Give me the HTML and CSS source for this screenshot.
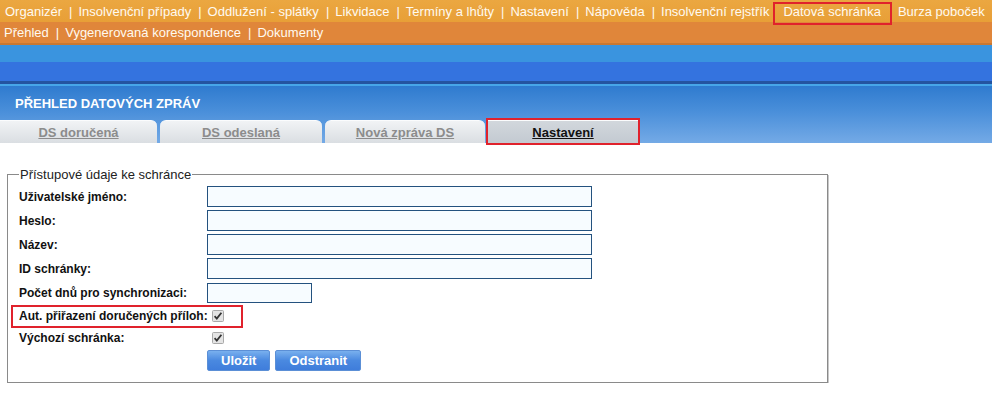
FILE: index.html
```html
<!DOCTYPE html>
<html lang="cs">
<head>
    <meta charset="UTF-8">
    <title>Přehled datových zpráv</title>
    <link rel="stylesheet" href="styles.css">
</head>
<body>
    <div class="topmenu">
        <div class="menu-row first">
            <a href="#">Organizér</a><span class="sep">|</span>
            <a href="#">Insolvenční případy</a><span class="sep">|</span>
            <a href="#">Oddlužení - splátky</a><span class="sep">|</span>
            <a href="#">Likvidace</a><span class="sep">|</span>
            <a href="#">Termíny a lhůty</a><span class="sep">|</span>
            <a href="#">Nastavení</a><span class="sep">|</span>
            <a href="#">Nápověda</a><span class="sep">|</span>
            <a href="#">Insolvenční rejstřík</a>
            <a href="#" class="marked">Datová schránka</a>
            <a href="#">Burza poboček</a>
        </div>
        <div class="menu-row second">
            <a href="#">Přehled</a><span class="sep">|</span>
            <a href="#">Vygenerovaná korespondence</a><span class="sep">|</span>
            <a href="#">Dokumenty</a>
        </div>
    </div>

    <div class="bluebar">
        <div class="band-light"></div>
        <div class="band-dark"></div>
    </div>

    <div class="pagehead">
        <h1>PŘEHLED DATOVÝCH ZPRÁV</h1>
        <div class="tabs">
            <a href="#" class="tab t1">DS doručená</a>
            <a href="#" class="tab t2">DS odeslaná</a>
            <a href="#" class="tab t3">Nová zpráva DS</a>
            <a href="#" class="tab t4 active">Nastavení</a>
        </div>
    </div>

    <form class="settings">
        <fieldset>
            <legend>Přístupové údaje ke schránce</legend>
            <div class="row">
                <label>Uživatelské jméno:</label>
                <input type="text" class="field">
            </div>
            <div class="row">
                <label>Heslo:</label>
                <input type="password" class="field">
            </div>
            <div class="row">
                <label>Název:</label>
                <input type="text" class="field">
            </div>
            <div class="row">
                <label>ID schránky:</label>
                <input type="text" class="field">
            </div>
            <div class="row">
                <label>Počet dnů pro synchronizaci:</label>
                <input type="text" class="field short">
            </div>
            <div class="row check-row">
                <span class="highlight"></span>
                <label>Aut. přiřazení doručených příloh:</label>
                <span class="check"><svg width="12" height="12" viewBox="0 0 12 12"><rect x="0.5" y="0.5" width="11" height="11" rx="1" fill="#e4e4e4" stroke="#a9a9a9"/><path d="M2.6 6.2 L4.8 8.6 L9.4 2.8" fill="none" stroke="#333" stroke-width="1.8"/></svg></span>
            </div>
            <div class="row check-row">
                <label>Výchozí schránka:</label>
                <span class="check"><svg width="12" height="12" viewBox="0 0 12 12"><rect x="0.5" y="0.5" width="11" height="11" rx="1" fill="#e4e4e4" stroke="#a9a9a9"/><path d="M2.6 6.2 L4.8 8.6 L9.4 2.8" fill="none" stroke="#333" stroke-width="1.8"/></svg></span>
            </div>
            <div class="row buttons">
                <label></label>
                <button type="button">Uložit</button>
                <button type="button">Odstranit</button>
            </div>
        </fieldset>
    </form>
</body>
</html>
```

FILE: styles.css
```css
body {
    margin: 0;
    font-family: "Liberation Sans", Arial, sans-serif;
    background-color: #fff;
    color: #000;
}

/* horni menu */
.topmenu {
    font-size: 13px;
}
.menu-row {
    display: flex;
    align-items: center;
    height: 22px;
    padding-left: 5px;
    white-space: nowrap;
}
.menu-row.first {
    background: linear-gradient(#eba741, #e89f37);
}
.menu-row.second {
    height: 21px;
    padding-left: 4px;
    background-color: #e0863a;
    border-bottom: 2px solid #c97832;
}
.menu-row a {
    color: #fffaf0;
    text-decoration: none;
}
.menu-row .sep {
    color: #fffaf0;
    margin: 0 6px 0 7px;
}
.menu-row a.marked {
    position: relative;
    margin: 0 17px 0 14px;
}
.menu-row a.marked::after {
    content: "";
    position: absolute;
    left: -10px;
    right: -11px;
    top: -2px;
    height: 19px;
    border: 2px solid #e0222c;
}

/* modry pruh */
.bluebar .band-light {
    height: 17px;
    background-color: #3a94df;
}
.bluebar .band-dark {
    height: 19px;
    background-color: #3473df;
    border-bottom: 3px solid #2454a0;
    box-shadow: 0 2px 0 #47a6e8;
}

.pagehead {
    margin-top: 2px;
    background: linear-gradient(#2f7bcf, #4a8fda 45%, #74aae6);
}
.pagehead h1 {
    margin: 0;
    height: 34px;
    line-height: 35px;
    padding-left: 15px;
    font-size: 13px;
    font-weight: bold;
    color: #fff;
}

.tabs {
    display: flex;
    gap: 3px;
    height: 23px;
}
.tab {
    display: block;
    height: 23px;
    line-height: 23px;
    text-align: center;
    font-size: 13px;
    font-weight: bold;
    color: #8c8c8c;
    text-decoration: underline;
    background: linear-gradient(#f1f3f5, #dadee2);
    border-top: 1px solid #fbfcfd;
    border-radius: 6px 6px 0 0;
    box-sizing: border-box;
}
.tab.t1 { width: 157px; border-top-left-radius: 0; }
.tab.t2 { width: 162px; }
.tab.t3 { width: 160px; }
.tab.t4 { width: 150px; }
.tab.active {
    color: #111;
    background: linear-gradient(#d2d7dc, #c3cad1);
    border-radius: 0;
    outline: 2px solid #e0222c;
    outline-offset: 0;
}

/* formular */
.settings {
    padding: 24px 0 0 7px;
}
fieldset {
    width: 798px;
    margin: 0;
    padding: 4px 10px 11px 11px;
    border: 1px solid #8a8a8a;
    box-shadow: 1px 1px 0 #c8c8c8;
}
legend {
    padding: 0 1px;
    font-size: 13px;
    line-height: 15px;
    color: #222;
}
.row {
    display: flex;
    align-items: center;
    height: 21px;
    margin-bottom: 3px;
    position: relative;
}
.row label {
    width: 188px;
    flex: none;
    white-space: nowrap;
    font-size: 12px;
    font-weight: bold;
    color: #111;
}
.field {
    width: 385px;
    height: 21px;
    margin: 0;
    padding: 0 3px;
    box-sizing: border-box;
    border: 1px solid #24527f;
    background-color: #f7fcff;
    font-family: inherit;
    font-size: 12px;
}
.field.short {
    width: 105px;
    height: 20px;
}
.row.check-row {
    height: 19px;
}
.check {
    display: flex;
    margin-left: 5px;
}
.highlight {
    position: absolute;
    left: -8px;
    top: -1px;
    width: 228px;
    height: 19px;
    border: 2px solid #e0222c;
}
.row.buttons {
    margin-bottom: 0;
}
.buttons button {
    height: 21px;
    padding: 0 13px;
    margin-right: 5px;
    font-family: inherit;
    font-size: 13px;
    font-weight: bold;
    color: #fff;
    background: linear-gradient(#79b0ee, #4a89e0 50%, #3f7ddb);
    border: 1px solid #5b8fd6;
    border-radius: 2px;
    cursor: pointer;
}
```
